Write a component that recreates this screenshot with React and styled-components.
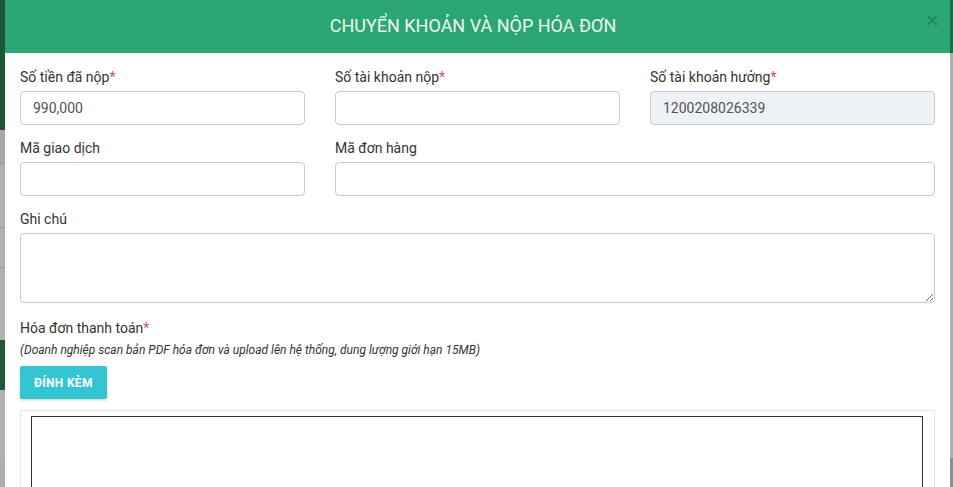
import React from 'react'
import styled, {createGlobalStyle} from 'styled-components'

// -------------------------------------------------------------
// Global.
// -------------------------------------------------------------

const GlobalStyle = createGlobalStyle`
  html, body {
    margin: 0;
    padding: 0;
    overflow: hidden;
    background: #a9a9a9;
    font-family: Roboto, "Noto Sans", Arial, sans-serif;
  }

  * {
    box-sizing: border-box;
  }
`

// -------------------------------------------------------------
// Backdrop (dimmed page behind the modal).
// -------------------------------------------------------------

const Page = styled.div`
  position: relative;
  width: 953px;
  height: 487px;
  overflow: hidden;
  background: #ababab;
`

const Backdrop = styled.div`
  position: absolute;
  inset: 0;
  display: flex;
  justify-content: space-between;
`

const LeftStrip = styled.div`
  width: 5px;
  display: flex;
  flex-direction: column;
  background: #adadad;
`

const StripBlock = styled.div`
  height: ${p => p.$h}px;
  background: ${p => p.$bg};
  border-bottom: ${p => (p.$line ? '1px solid #9a9a9a' : 'none')};
`

const RightStrip = styled.div`
  width: 3px;
  display: flex;
  flex-direction: column;
  background: #aaaaaa;
`

// -------------------------------------------------------------
// Modal.
// -------------------------------------------------------------

const Modal = styled.div`
  position: absolute;
  top: 0;
  left: 5px;
  width: 945px;
  background: #fff;
`

const ModalHeader = styled.div`
  position: relative;
  height: 53px;
  display: flex;
  align-items: center;
  justify-content: center;
  background: #2ba673;
`

const Title = styled.h4`
  margin: 0 0 2px -9px;
  color: #eef6f1;
  font-size: 18px;
  font-weight: 400;
`

const Close = styled.button`
  position: absolute;
  top: 15px;
  right: 12px;
  width: 11px;
  height: 11px;
  padding: 0;
  border: 0;
  background: none;
  display: flex;

  svg {
    display: block;
  }
`

const ModalBody = styled.div`
  padding: 14px 15px 0;
`

const Row = styled.div`
  display: grid;
  grid-template-columns: 1fr 1fr 1fr;
  column-gap: 30px;
  margin-bottom: ${p => p.$gap || 13}px;
`

const Field = styled.div`
  display: flex;
  flex-direction: column;
  grid-column: span ${p => p.$span || 1};
`

const Label = styled.label`
  display: block;
  height: 20px;
  margin-bottom: 4px;
  color: #333;
  font-size: 14px;
  line-height: 20px;
`

const Required = styled.span`
  color: #e64a5c;
`

const Input = styled.input`
  width: 100%;
  height: 34px;
  padding: 6px 12px;
  border: 1px solid #c5cbd6;
  border-radius: 4px;
  background: ${p => (p.disabled ? '#eef1f5' : '#fff')};
  color: #555;
  font-family: inherit;
  font-size: 14px;
  outline: none;
`

const TextArea = styled.textarea`
  display: block;
  width: 100%;
  height: 70px;
  padding: 6px 12px;
  border: 1px solid #c5cbd6;
  border-radius: 4px;
  background: #fff;
  color: #555;
  font-family: inherit;
  font-size: 14px;
  outline: none;
`

const Note = styled.p`
  margin: -1px 0 7px;
  color: #333;
  font-size: 12px;
  font-style: italic;
  line-height: 18px;
`

const AttachButton = styled.button`
  height: 33px;
  padding: 0 14px;
  border: 0;
  border-radius: 2px;
  background: #33c6d2;
  color: #fff;
  font-family: inherit;
  font-size: 12px;
  font-weight: 700;
  letter-spacing: 0.3px;
  box-shadow: 0 1px 3px rgba(0, 0, 0, 0.2);
`

const Preview = styled.div`
  margin-top: 11px;
  padding: 5px 11px 0 10px;
  border: 1px solid #e3e9ef;
  height: 200px;
`

const PreviewFrame = styled.div`
  height: 100%;
  border: 1px solid #333;
  background: #fff;
`

// -------------------------------------------------------------
// Export.
// -------------------------------------------------------------

export default function App() {
  return (
    <Page>
      <GlobalStyle />
      <Backdrop>
        <LeftStrip>
          <StripBlock $h={130} $bg="#1b5836" />
          <StripBlock $h={34} $bg="#a8a8a8" $line />
          <StripBlock $h={64} $bg="#b0b0b0" $line />
          <StripBlock $h={40} $bg="#b0b0b0" $line />
          <StripBlock $h={72} $bg="#b2b2b2" />
          <StripBlock $h={50} $bg="#1e5a38" />
          <StripBlock $h={68} $bg="#b2b2b2" />
        </LeftStrip>
        <RightStrip>
          <StripBlock $h={53} $bg="#1f6b44" />
          <StripBlock $h={405} $bg="#adadad" />
          <StripBlock $h={29} $bg="#8f8f8f" />
        </RightStrip>
      </Backdrop>

      <Modal>
        <ModalHeader>
          <Title>CHUYỂN KHOẢN VÀ NỘP HÓA ĐƠN</Title>
          <Close aria-label="Close">
            <svg width="11" height="11" viewBox="0 0 11 11">
              <path
                d="M1 1 L10 10 M10 1 L1 10"
                stroke="rgba(0,0,0,0.22)"
                strokeWidth="1.6"
                fill="none"
              />
            </svg>
          </Close>
        </ModalHeader>

        <ModalBody>
          <Row>
            <Field>
              <Label>
                Số tiền đã nộp<Required>*</Required>
              </Label>
              <Input defaultValue="990,000" />
            </Field>
            <Field>
              <Label>
                Số tài khoản nộp<Required>*</Required>
              </Label>
              <Input />
            </Field>
            <Field>
              <Label>
                Số tài khoản hưởng<Required>*</Required>
              </Label>
              <Input disabled defaultValue="1200208026339" />
            </Field>
          </Row>

          <Row>
            <Field>
              <Label>Mã giao dịch</Label>
              <Input />
            </Field>
            <Field $span={2}>
              <Label>Mã đơn hàng</Label>
              <Input />
            </Field>
          </Row>

          <Row $gap={15}>
            <Field $span={3}>
              <Label>Ghi chú</Label>
              <TextArea />
            </Field>
          </Row>

          <Field>
            <Label>
              Hóa đơn thanh toán<Required>*</Required>
            </Label>
            <Note>
              (Doanh nghiệp scan bản PDF hóa đơn và upload lên hệ thống, dung lượng giới hạn 15MB)
            </Note>
            <div>
              <AttachButton>ĐÍNH KÈM</AttachButton>
            </div>
            <Preview>
              <PreviewFrame />
            </Preview>
          </Field>
        </ModalBody>
      </Modal>
    </Page>
  )
}
